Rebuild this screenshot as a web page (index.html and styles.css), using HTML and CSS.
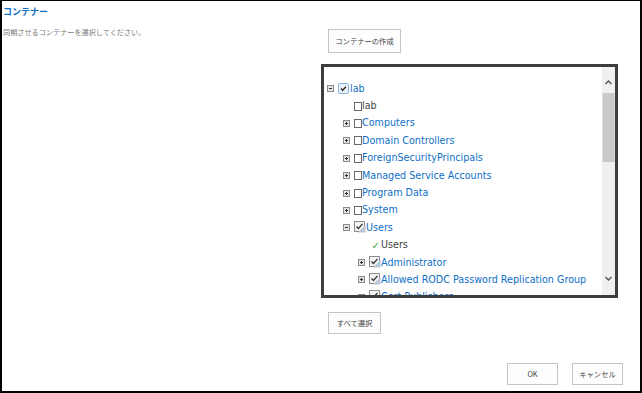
FILE: index.html
```html
<!DOCTYPE html>
<html lang="ja">
<head>
<meta charset="utf-8">
<link rel="stylesheet" href="styles.css">
</head>
<body>
<div class="page">
  <div class="title">コンテナー</div>
  <div class="main">
    <div class="left">
      <div class="desc">同期させるコンテナーを選択してください。</div>
    </div>
    <div class="right">
      <button class="btn btn-create">コンテナーの作成</button>
      <div class="tree-box">
        <div class="tree">
          <div class="row l0">
            <svg class="exp" viewBox="0 0 7 7"><rect x="0.5" y="0.5" width="6" height="6" fill="#e4e4e4" stroke="#8a8a8a"/><path d="M2 3.5h3" stroke="#333"/></svg>
            <svg class="cb-root" viewBox="0 0 11 11"><rect x="0.5" y="0.5" width="10" height="10" rx="1" fill="#e9f2fb" stroke="#86b3dc"/><path d="M3 5.5l1.8 1.8L8 3.6" fill="none" stroke="#222" stroke-width="1.3"/></svg>
            <span class="lbl link">lab</span>
          </div>
          <div class="row l1">
            <span class="exp"></span><span class="box"></span><span class="lbl plain">lab</span>
          </div>
          <div class="row l1">
            <svg class="exp" viewBox="0 0 7 7"><rect x="0.5" y="0.5" width="6" height="6" fill="#e4e4e4" stroke="#8a8a8a"/><path d="M2 3.5h3M3.5 2v3" stroke="#333"/></svg><span class="box"></span><span class="lbl link">Computers</span>
          </div>
          <div class="row l1">
            <svg class="exp" viewBox="0 0 7 7"><rect x="0.5" y="0.5" width="6" height="6" fill="#e4e4e4" stroke="#8a8a8a"/><path d="M2 3.5h3M3.5 2v3" stroke="#333"/></svg><span class="box"></span><span class="lbl link">Domain Controllers</span>
          </div>
          <div class="row l1">
            <svg class="exp" viewBox="0 0 7 7"><rect x="0.5" y="0.5" width="6" height="6" fill="#e4e4e4" stroke="#8a8a8a"/><path d="M2 3.5h3M3.5 2v3" stroke="#333"/></svg><span class="box"></span><span class="lbl link">ForeignSecurityPrincipals</span>
          </div>
          <div class="row l1">
            <svg class="exp" viewBox="0 0 7 7"><rect x="0.5" y="0.5" width="6" height="6" fill="#e4e4e4" stroke="#8a8a8a"/><path d="M2 3.5h3M3.5 2v3" stroke="#333"/></svg><span class="box"></span><span class="lbl link">Managed Service Accounts</span>
          </div>
          <div class="row l1">
            <svg class="exp" viewBox="0 0 7 7"><rect x="0.5" y="0.5" width="6" height="6" fill="#e4e4e4" stroke="#8a8a8a"/><path d="M2 3.5h3M3.5 2v3" stroke="#333"/></svg><span class="box"></span><span class="lbl link">Program Data</span>
          </div>
          <div class="row l1">
            <svg class="exp" viewBox="0 0 7 7"><rect x="0.5" y="0.5" width="6" height="6" fill="#e4e4e4" stroke="#8a8a8a"/><path d="M2 3.5h3M3.5 2v3" stroke="#333"/></svg><span class="box"></span><span class="lbl link">System</span>
          </div>
          <div class="row l1">
            <svg class="exp" viewBox="0 0 7 7"><rect x="0.5" y="0.5" width="6" height="6" fill="#e4e4e4" stroke="#8a8a8a"/><path d="M2 3.5h3" stroke="#333"/></svg>
            <svg class="cb-img" viewBox="0 0 12 12"><rect x="0.5" y="0.5" width="10" height="10" fill="#f4f4f4" stroke="#8d8d8d"/><path d="M4 11.5L11.5 4v7.5z" fill="#b9c6d3"/><path d="M2.5 5.5l2 2L8.5 2.8" fill="none" stroke="#333" stroke-width="1.3"/></svg><span class="lbl link">Users</span>
          </div>
          <div class="row l2">
            <span class="exp"></span><span class="chk">✓</span><span class="lbl plain">Users</span>
          </div>
          <div class="row l2">
            <svg class="exp" viewBox="0 0 7 7"><rect x="0.5" y="0.5" width="6" height="6" fill="#e4e4e4" stroke="#8a8a8a"/><path d="M2 3.5h3M3.5 2v3" stroke="#333"/></svg>
            <svg class="cb-img" viewBox="0 0 12 12"><rect x="0.5" y="0.5" width="10" height="10" fill="#f4f4f4" stroke="#8d8d8d"/><path d="M4 11.5L11.5 4v7.5z" fill="#b9c6d3"/><path d="M2.5 5.5l2 2L8.5 2.8" fill="none" stroke="#333" stroke-width="1.3"/></svg><span class="lbl link">Administrator</span>
          </div>
          <div class="row l2">
            <svg class="exp" viewBox="0 0 7 7"><rect x="0.5" y="0.5" width="6" height="6" fill="#e4e4e4" stroke="#8a8a8a"/><path d="M2 3.5h3M3.5 2v3" stroke="#333"/></svg>
            <svg class="cb-img" viewBox="0 0 12 12"><rect x="0.5" y="0.5" width="10" height="10" fill="#f4f4f4" stroke="#8d8d8d"/><path d="M4 11.5L11.5 4v7.5z" fill="#b9c6d3"/><path d="M2.5 5.5l2 2L8.5 2.8" fill="none" stroke="#333" stroke-width="1.3"/></svg><span class="lbl link">Allowed RODC Password Replication Group</span>
          </div>
          <div class="row l2">
            <svg class="exp" viewBox="0 0 7 7"><rect x="0.5" y="0.5" width="6" height="6" fill="#e4e4e4" stroke="#8a8a8a"/><path d="M2 3.5h3M3.5 2v3" stroke="#333"/></svg>
            <svg class="cb-img" viewBox="0 0 12 12"><rect x="0.5" y="0.5" width="10" height="10" fill="#f4f4f4" stroke="#8d8d8d"/><path d="M4 11.5L11.5 4v7.5z" fill="#b9c6d3"/><path d="M2.5 5.5l2 2L8.5 2.8" fill="none" stroke="#333" stroke-width="1.3"/></svg><span class="lbl link">Cert Publishers</span>
          </div>
        </div>
        <svg class="scrollbar" viewBox="0 0 13 228" preserveAspectRatio="none">
          <rect x="0" y="0" width="13" height="228" fill="#f0f0f0"/>
          <rect x="0.5" y="26" width="12" height="69" fill="#c9c9c9"/>
          <path d="M3.5 17l3-3 3 3" fill="none" stroke="#555" stroke-width="1.4"/>
          <path d="M3.5 210l3 3 3-3" fill="none" stroke="#555" stroke-width="1.4"/>
        </svg>
      </div>
      <button class="btn btn-all">すべて選択</button>
    </div>
  </div>
  <div class="footer">
    <button class="btn btn-foot">OK</button>
    <button class="btn btn-foot">キャンセル</button>
  </div>
</div>
</body>
</html>
```

FILE: styles.css
```css
* { box-sizing: border-box; }
html, body { margin: 0; padding: 0; background: #fff; }
.page {
  width: 642px;
  height: 393px;
  border-style: solid;
  border-color: #000;
  border-width: 1px 2px 2px 2px;
  font-family: "Noto Sans CJK JP", "Noto Sans", sans-serif;
  overflow: hidden;
}
.title {
  margin: 5px 0 0 1px;
  font-size: 9px;
  line-height: 12px;
  font-weight: bold;
  color: #0f6fc6;
}
.main {
  margin-top: 11px;
  display: grid;
  grid-template-columns: 319px 1fr;
}
.desc {
  margin: -2px 0 0 1px;
  font-size: 7.15px;
  line-height: 10px;
  color: #7a7a7a;
  white-space: nowrap;
}
.right { display: flex; flex-direction: column; align-items: flex-start; }
.btn {
  font-family: "Noto Sans CJK JP", "Noto Sans", sans-serif;
  font-size: 7.3px;
  color: #444;
  background: #fdfdfd;
  border: 1px solid #c4c4c4;
  padding: 0;
  margin: 0;
  display: flex;
  align-items: center;
  justify-content: center;
}
.btn-create { width: 73px; height: 24px; margin-left: 7px; }
.btn-all { width: 53px; height: 22px; margin-left: 7px; margin-top: 14px; }
.tree-box {
  margin-top: 11px;
  width: 297px;
  height: 234px;
  border: 3px solid #3d3d3d;
  display: flex;
}
.tree {
  flex: 1;
  overflow: hidden;
  padding-top: 13px;
  font-family: "DejaVu Sans", Verdana, sans-serif;
  font-size: 9.6px;
}
.row {
  height: 17.4px;
  display: flex;
  align-items: center;
  white-space: nowrap;
}
.l0 { padding-left: 3px; }
.l1 { padding-left: 19px; }
.l2 { padding-left: 34px; }
.exp { width: 7px; height: 7px; flex: none; margin-right: 4px; display: block; }
.cb-root { width: 11px; height: 11px; flex: none; margin-right: 1px; display: block; }
.cb-img { width: 12px; height: 12px; flex: none; display: block; margin-top: -2px; }
.box {
  width: 8px; height: 9px; flex: none;
  border: 1px solid #6a6a6a;
  background: #fff;
}
.chk {
  width: 12px; flex: none;
  color: #3aa53a;
  font-size: 10px;
  font-weight: bold;
  text-align: right;
  padding-right: 1px;
}
.lbl { line-height: 12px; }
.link { color: #0f6fc6; }
.plain { color: #444; }
.scrollbar { width: 13px; height: 228px; flex: none; display: block; }
.footer {
  margin-top: 29px;
  display: flex;
  justify-content: flex-end;
  gap: 14px;
  padding-right: 17px;
}
.btn-foot { width: 51px; height: 22px; }
```
